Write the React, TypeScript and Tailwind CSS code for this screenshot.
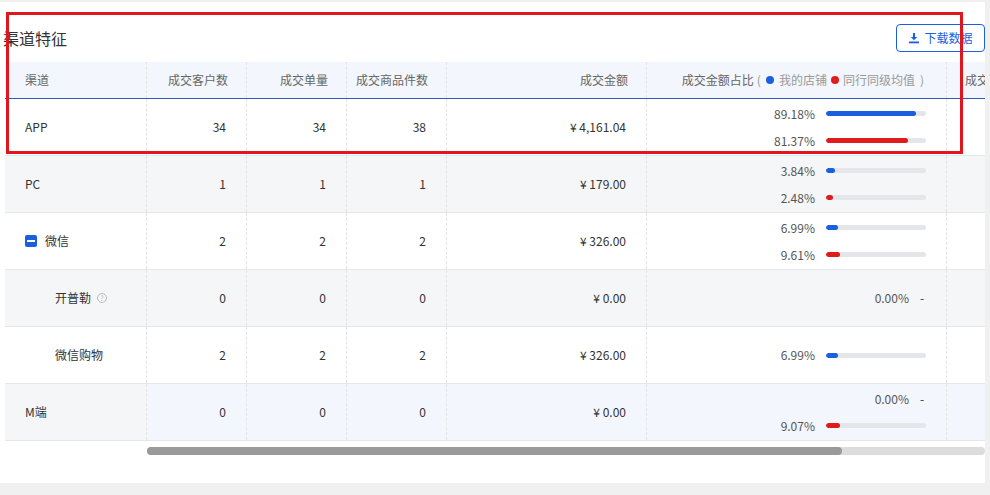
import React from "react";

type Bar = { v: string; p: number; c: "b" | "r" } | { v: string; dash: true };
type Row = { name: string; indent?: number; icon?: "minus" | "q"; n: [string, string, string]; amt: string; bars: Bar[]; bg: string; numBg?: string };

const rows: Row[] = [
  { name: "APP", n: ["34", "34", "38"], amt: "¥ 4,161.04", bars: [{ v: "89.18%", p: 89.18, c: "b" }, { v: "81.37%", p: 81.37, c: "r" }], bg: "bg-white" },
  { name: "PC", n: ["1", "1", "1"], amt: "¥ 179.00", bars: [{ v: "3.84%", p: 3.84, c: "b" }, { v: "2.48%", p: 2.48, c: "r" }], bg: "bg-[#f5f6f8]" },
  { name: "微信", icon: "minus", n: ["2", "2", "2"], amt: "¥ 326.00", bars: [{ v: "6.99%", p: 6.99, c: "b" }, { v: "9.61%", p: 9.61, c: "r" }], bg: "bg-white" },
  { name: "开普勒", indent: 1, icon: "q", n: ["0", "0", "0"], amt: "¥ 0.00", bars: [{ v: "0.00%", dash: true }], bg: "bg-[#f5f6f8]" },
  { name: "微信购物", indent: 1, n: ["2", "2", "2"], amt: "¥ 326.00", bars: [{ v: "6.99%", p: 6.99, c: "b" }], bg: "bg-white" },
  { name: "M端", n: ["0", "0", "0"], amt: "¥ 0.00", bars: [{ v: "0.00%", dash: true }, { v: "9.07%", p: 9.07, c: "r" }], bg: "bg-[#f5f6f8]", numBg: "bg-[#f3f6fc]" },
];

const dash = "border-r border-dashed border-[#e3e3e3]";

function BarLine({ b }: { b: Bar }) {
  if ("dash" in b) {
    return (
      <div className="flex items-center justify-end h-[27px] pr-[20px]">
        <span className="text-[#555]">{b.v}</span>
        <span className="ml-[11px] w-[6px] text-[#333]">-</span>
      </div>
    );
  }
  return (
    <div className="flex items-center justify-end h-[27px] pr-[20px]">
      <span className="text-[#555] mr-[11px]">{b.v}</span>
      <div className="w-[100px] h-[5px] rounded-full bg-[#e4e6ea] overflow-hidden">
        <div className={`h-full rounded-full ${b.c === "b" ? "bg-[#1a5fe0]" : "bg-[#e01b1b]"}`} style={{ width: `${5 + b.p * 0.95}px` }} />
      </div>
    </div>
  );
}

export default function App() {
  return (
    <div className="w-[990px] h-[495px] bg-[#f0f0f0] relative overflow-hidden text-[12px]" style={{ fontFamily: '"Noto Sans CJK SC", "Noto Sans", sans-serif' }}>
      <div className="mt-[2px] w-[985px] h-[481px] bg-white overflow-hidden">
        <div className="flex items-center justify-between h-[60px] pl-[4px]">
          <div className="text-[16px] text-[#333] -ml-[1px] mt-[12px]">渠道特征</div>
          <button className="h-[28px] w-[89px] mt-[12px] border border-[#1a5fe0] rounded-[4px] text-[#1a5fe0] flex items-center justify-center gap-[4px]">
            <svg width="12" height="12" viewBox="0 0 12 12" fill="#1a5fe0"><path d="M5 1h2v4h2.2L6 8.3 2.8 5H5z" /><rect x="1" y="9.5" width="10" height="1.8" /></svg>
            下载数据
          </button>
        </div>
        <div className="ml-[5px] w-[1000px]">
          <div className="flex h-[37px] bg-[#f3f6fc] border-b border-[#2c5bc2] text-[#666] items-center">
            <div className={`w-[142px] pl-[20px] h-full flex items-center ${dash}`}>渠道</div>
            <div className={`w-[100px] pr-[18px] h-full flex items-center justify-end ${dash}`}>成交客户数</div>
            <div className={`w-[100px] pr-[18px] h-full flex items-center justify-end ${dash}`}>成交单量</div>
            <div className={`w-[100px] pr-[18px] h-full flex items-center justify-end ${dash}`}>成交商品件数</div>
            <div className={`w-[200px] pr-[18px] h-full flex items-center justify-end ${dash}`}>成交金额</div>
            <div className={`w-[300px] pr-[22px] h-full flex items-center justify-end whitespace-nowrap ${dash}`}>
              成交金额占比<span className="text-[#999] ml-[3px]">(</span><span className="inline-block w-[8px] h-[8px] rounded-full bg-[#1a5fe0] mx-[5px]" /><span className="text-[#999]">我的店铺</span><span className="inline-block w-[8px] h-[8px] rounded-full bg-[#e01b1b] mx-[4px]" /><span className="text-[#999]">同行同级均值</span><span className="text-[#999] ml-[5px]">)</span>
            </div>
            <div className="pl-[18px] whitespace-nowrap">成交</div>
          </div>
          {rows.map((r, i) => (
            <div key={i} className={`flex h-[57px] border-b border-[#e4e6ea] text-[#333] ${r.bg}`}>
              <div className={`w-[142px] h-full flex items-center ${r.indent ? "pl-[50px]" : "pl-[20px]"} ${dash}`}>
                {r.icon === "minus" && (
                  <span className="w-[12px] h-[12px] rounded-[2px] bg-[#1a5fe0] flex items-center justify-center mr-[8px]"><span className="w-[8px] h-[2px] bg-white" /></span>
                )}
                {r.name}
                {r.icon === "q" && (
                  <span className="ml-[6px] w-[10px] h-[10px] rounded-full border border-[#bbb] text-[#bbb] text-[7px] leading-none flex items-center justify-center">?</span>
                )}
              </div>
              {r.n.map((v, j) => (
                <div key={j} className={`w-[100px] h-full pr-[20px] flex items-center justify-end ${r.numBg ?? ""} ${dash}`}>{v}</div>
              ))}
              <div className={`w-[200px] h-full pr-[20px] flex items-center justify-end ${r.numBg ?? ""} ${dash}`}>{r.amt}</div>
              <div className={`w-[300px] h-full flex flex-col justify-center ${r.numBg ?? ""} ${dash}`}>
                {r.bars.map((b, k) => <BarLine key={k} b={b} />)}
              </div>
              <div className={`flex-1 h-full ${r.numBg ?? ""}`} />
            </div>
          ))}
          <div className="ml-[142px] mt-[6px] w-[838px] h-[8px] rounded-full bg-[#dcdcdc]">
            <div className="w-[695px] h-full rounded-full bg-[#9a9a9a]" />
          </div>
        </div>
      </div>
      <div className="absolute left-[6px] top-[12px] w-[957px] h-[142px] border-[3px] border-[#e0161d] pointer-events-none" />
    </div>
  );
}
